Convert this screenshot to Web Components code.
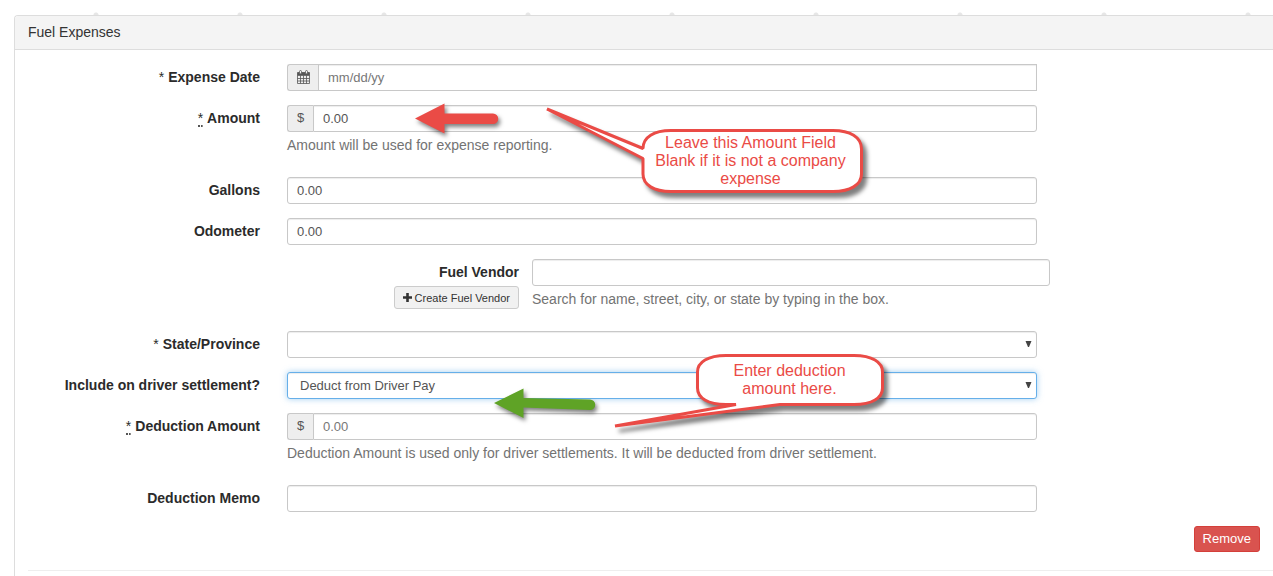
<!DOCTYPE html>
<html lang="en">
<head>
<meta charset="utf-8">
<title>Fuel Expenses</title>
<style>
body { margin: 0; font-family: "Liberation Sans", Arial, sans-serif; font-size: 14px; line-height: 20px; color: #333; background: #fff; }
</style>
</head>
<body>
<expense-page></expense-page>
<script>
const sharedCss = `
  * { box-sizing: border-box; }
  :host { display: block; }
  .row { display: grid; grid-template-columns: 232fr 750fr 196fr; column-gap: 27px; margin-bottom: 14px; padding-right: 13px; align-items: start; }
  label { display: block; text-align: right; font-weight: 700; padding: 3px 0; line-height: 20px; white-space: nowrap; color: #2b2b2b; }
  abbr { font-weight: 400; text-decoration: none; margin-right: 4px; }
  abbr.dotted { display: inline-block; line-height: 14px; border-bottom: 2px dotted #555; }
  .group { display: flex; height: 27px; }
  .addon { flex: none; display: flex; align-items: center; justify-content: center; padding-bottom: 2px; font-size: 13px; color: #555; background: #eee; border: 1px solid #c8c8c8; border-right: 0; border-radius: 3px 0 0 3px; width: 26px; }
  .addon.icon { width: 31px; }
  input, select { display: block; flex: 1; min-width: 0; width: 100%; height: 27px; margin: 0; padding: 0 9px; font: 13px "Liberation Sans", Arial, sans-serif; color: #555; background: #fff; border: 1px solid #c8c8c8; border-radius: 3px; box-shadow: inset 0 1px 1px rgba(0,0,0,.075); outline: 0; }
  input::placeholder { color: #777; opacity: 1; }
  .addon + input { border-radius: 0 3px 3px 0; padding-bottom: 1px; }
  .addon.icon + input { border-radius: 0; }
  .help { margin: 3px 0 0; padding-bottom: 8px; line-height: 20px; color: #737373; }
`;

const calendar = `<svg width="13" height="14" viewBox="0 0 13 14" role="img" aria-label="Calendar">
  <g fill="none" stroke="#555"><path d="M.5 2.5h12v11H.5zM.5 5.5h12M.5 8.5h12M.5 11h12M3.5 5.5v8M6.5 5.5v8M9.5 5.5v8" stroke-width=".8"/></g>
  <path d="M.5 2.5h12v2.6H.5z" fill="#555"/><rect x="2.5" y=".5" width="2" height="3.4" rx="1" fill="#eee" stroke="#555" stroke-width=".8"/><rect x="8.5" y=".5" width="2" height="3.4" rx="1" fill="#eee" stroke="#555" stroke-width=".8"/></svg>`;

function labelMarkup(el) {
  const mark = el.getAttribute("required");
  const star = mark === null ? "" : `<abbr title="required" class="${mark}">*</abbr>`;
  return `<label for="control">${star}${el.getAttribute("label")}</label>`;
}
function helpMarkup(el) {
  return el.hasAttribute("help") ? `<p class="help">${el.getAttribute("help")}</p>` : "";
}

customElements.define("text-field", class extends HTMLElement {
  constructor() { super(); this.attachShadow({ mode: "open" }); }
  connectedCallback() {
    const addon = this.getAttribute("addon");
    const addonMarkup = addon === "calendar" ? `<span class="addon icon">${calendar}</span>`
      : addon ? `<span class="addon">${addon}</span>` : "";
    this.shadowRoot.innerHTML = `<style>${sharedCss}</style>
      <div class="row">${labelMarkup(this)}
        <div><div class="group">${addonMarkup}<input id="control" type="text"
          value="${this.getAttribute("value") || ""}" placeholder="${this.getAttribute("placeholder") || ""}"></div>${helpMarkup(this)}</div>
      </div>`;
  }
});

customElements.define("select-field", class extends HTMLElement {
  constructor() { super(); this.attachShadow({ mode: "open" }); }
  connectedCallback() {
    this.shadowRoot.innerHTML = `<style>${sharedCss}
      .group { position: relative; }
      select { appearance: none; padding-left: 12px; }
      :host([active]) select { border-color: #66afe9; box-shadow: inset 0 1px 1px rgba(0,0,0,.075), 0 0 6px rgba(102,175,233,.6); }
      svg { position: absolute; right: 5px; top: 10px; pointer-events: none; }
      </style>
      <div class="row">${labelMarkup(this)}
        <div class="group"><select id="control"><option>${this.getAttribute("value") || ""}</option></select>
        <svg width="7" height="7" aria-hidden="true"><path d="M.5 0h6L4 6H3z" fill="#444"/></svg></div>
      </div>`;
  }
});

customElements.define("vendor-field", class extends HTMLElement {
  constructor() { super(); this.attachShadow({ mode: "open" }); }
  connectedCallback() {
    this.shadowRoot.innerHTML = `<style>${sharedCss}
      .row { grid-template-columns: 491fr 518fr 197fr; column-gap: 13px; }
      .side { display: flex; flex-direction: column; align-items: flex-end; }
      button { display: flex; align-items: center; gap: 3px; height: 23px; margin: 1px 0 0; padding: 0 8px; font: 11px "Liberation Sans", Arial, sans-serif; color: #333; background: #f1f1f1; border: 1px solid #ccc; border-radius: 3px; white-space: nowrap; }
      </style>
      <div class="row"><div class="side">${labelMarkup(this)}
        <button type="button"><svg width="9" height="9" aria-hidden="true"><path d="M3.2 0h2.6v3.2H9v2.6H5.8V9H3.2V5.8H0V3.2h3.2z" fill="#333"/></svg>Create Fuel Vendor</button></div>
        <div><div class="group"><input id="control" type="text"></div>${helpMarkup(this)}</div>
      </div>`;
  }
});

customElements.define("form-panel", class extends HTMLElement {
  constructor() {
    super();
    this.attachShadow({ mode: "open" }).innerHTML = `<style>
      * { box-sizing: border-box; }
      :host { display: flex; flex-direction: column; flex: 1; margin-left: 14px; border: solid #ddd; border-width: 1px 0 0 1px; border-radius: 4px 0 0 0; }
      header { height: 34px; padding: 6px 13px; background: #f4f4f4; border-bottom: 1px solid #ddd; border-radius: 3px 0 0 0; }
      section { padding: 14px 0 5px 13px; }
      </style><header><slot name="title"></slot></header><section><slot></slot></section>`;
  }
});

customElements.define("form-actions", class extends HTMLElement {
  constructor() {
    super();
    this.attachShadow({ mode: "open" }).innerHTML = `<style>
      :host { display: flex; justify-content: flex-end; padding: 0 13px 18px 0; border-bottom: 1px solid #eee; }
      button { height: 26px; margin: 0; padding: 0 8px 1px; font: 13px "Liberation Sans", Arial, sans-serif; color: #fff; background: #d9534f; border: 1px solid #d43f3a; border-radius: 3px; }
      </style><button type="button"><slot></slot></button>`;
  }
});

/* A speech bubble laid over the form. */
customElements.define("call-out", class extends HTMLElement {
  constructor() { super(); this.attachShadow({ mode: "open" }); }
  connectedCallback() {
    const a = n => this.getAttribute(n);
    this.shadowRoot.innerHTML = `<style>
      :host { display: block; position: absolute; left: ${a("x")}px; top: ${a("y")}px; pointer-events: none; }
      svg { display: block; overflow: visible; filter: drop-shadow(4px 5px 2px rgba(0,0,0,.5)); }
      p { position: absolute; margin: 0; left: ${a("text-x")}px; top: ${a("text-y")}px; width: ${a("text-width")}px; text-align: center; font-size: 16px; line-height: 18px; color: #ea4b46; }
      </style><svg width="${a("width")}" height="${a("height")}" aria-hidden="true"><path d="${a("shape")}" fill="#fff" stroke="#ea4b46" stroke-width="3" stroke-linejoin="bevel"/></svg><p><slot></slot></p>`;
  }
});

/* A coloured arrow laid over the form. */
customElements.define("point-arrow", class extends HTMLElement {
  constructor() { super(); this.attachShadow({ mode: "open" }); }
  connectedCallback() {
    const a = n => this.getAttribute(n);
    this.shadowRoot.innerHTML = `<style>
      :host { display: block; position: absolute; left: ${a("x")}px; top: ${a("y")}px; pointer-events: none; }
      svg { display: block; overflow: visible; filter: drop-shadow(2px 3px 2px rgba(0,0,0,.5)); }
      </style><svg width="84" height="30" aria-hidden="true"><path d="${a("shape")}" fill="${a("color")}"/></svg>`;
  }
});

customElements.define("expense-page", class extends HTMLElement {
  constructor() {
    super();
    this.attachShadow({ mode: "open" }).innerHTML = `<style>
      :host { display: flex; flex-direction: column; position: relative; min-height: 100vh; overflow: hidden; }
      .dots { height: 15px; background: radial-gradient(circle at 72px 15px, #e6e6e6 2px, transparent 3px) 24px 0 / 144px 15px repeat-x; }
      </style>
      <div class="dots"></div>
      <form-panel>
        <span slot="title">Fuel Expenses</span>
        <text-field label="Expense Date" required="plain" addon="calendar" placeholder="mm/dd/yy"></text-field>
        <text-field label="Amount" required="dotted" addon="$" value="0.00" help="Amount will be used for expense reporting."></text-field>
        <text-field label="Gallons" value="0.00"></text-field>
        <text-field label="Odometer" value="0.00"></text-field>
        <vendor-field label="Fuel Vendor" help="Search for name, street, city, or state by typing in the box."></vendor-field>
        <select-field label="State/Province" required="plain"></select-field>
        <select-field label="Include on driver settlement?" value="Deduct from Driver Pay" active></select-field>
        <text-field label="Deduction Amount" required="dotted" addon="$" placeholder="0.00" help="Deduction Amount is used only for driver settlements. It will be deducted from driver settlement."></text-field>
        <text-field label="Deduction Memo"></text-field>
        <form-actions>Remove</form-actions>
      </form-panel>
      <point-arrow x="415" y="103" color="#ea4b46" shape="M0 15.5L29.5 .5V10.5H78a5 5 0 0 1 0 10.5H29.5V30.5z"></point-arrow>
      <point-arrow x="494" y="388" color="#5fa326" shape="M0 15L29.5 .5V10L96 11.5a5 5 0 0 1 0 10.5L29.5 19.5V30z"></point-arrow>
      <call-out x="546" y="108" width="320" height="90" text-x="108" text-y="26" text-width="193"
        shape="M1 1L97 40.500C97 29 108 22.500 125 22.500H287C304 22.500 315.500 29 315.500 41V66C315.500 77 304 83.500 287 83.500H125C108 83.500 97 77 97 66V50.500Z">Leave this Amount Field Blank if it is not a company expense</call-out>
      <call-out x="614" y="354" width="272" height="75" text-x="103" text-y="8" text-width="145"
        shape="M1 72L122 50.500H112C94 50.500 83.500 44 83.500 34V18C83.500 8 94 1.500 112 1.500H240C258 1.500 268.500 8 268.500 18V34C268.500 44 258 50.500 240 50.500H166Z">Enter deduction amount here.</call-out>`;
  }
});
</script>
</body>
</html>
